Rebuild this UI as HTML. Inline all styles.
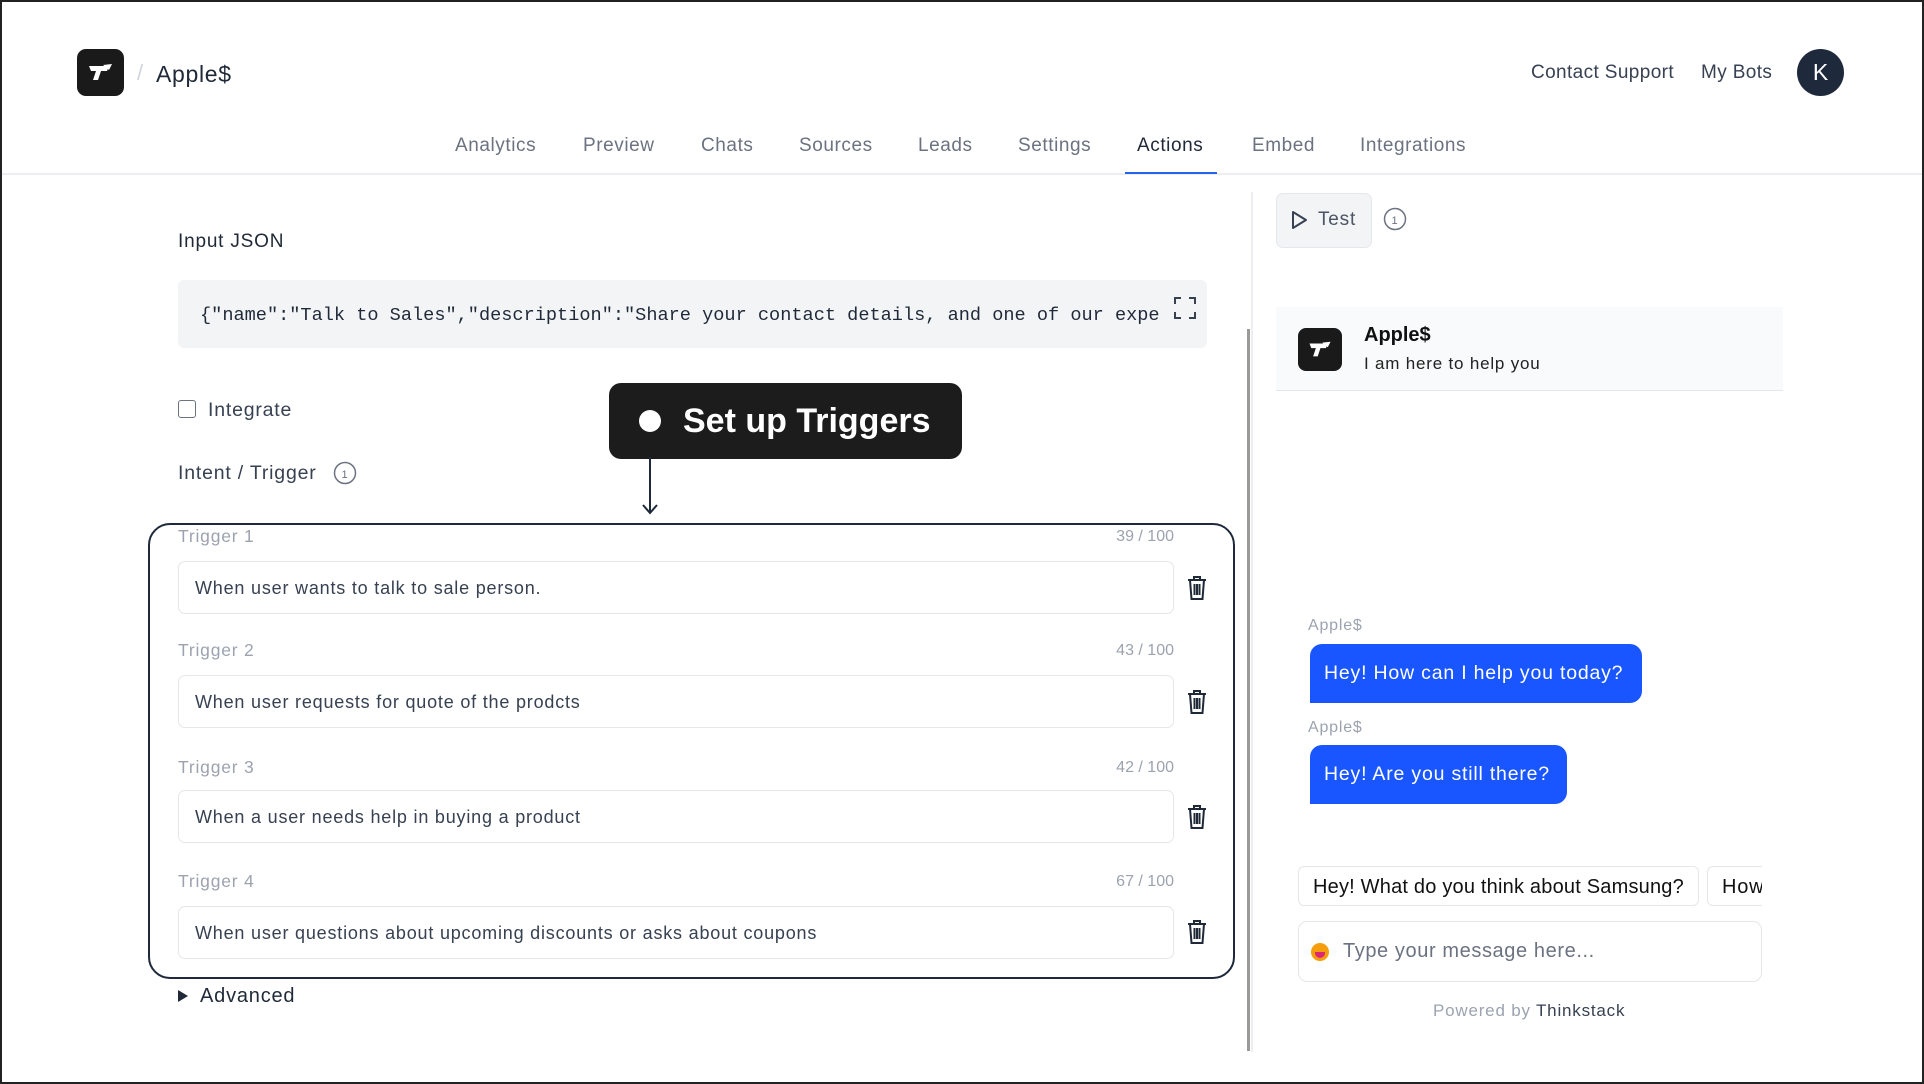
<!DOCTYPE html>
<html><head><meta charset="utf-8"><style>
*{margin:0;padding:0;box-sizing:border-box}
body{width:1924px;height:1084px;background:#fff;font-family:"Liberation Sans",Arial,sans-serif;position:relative;overflow:hidden;color:#111827;letter-spacing:0.05em}
.frame{position:absolute;left:0;top:0;width:1924px;height:1084px;border:2px solid #222;pointer-events:none;z-index:10}
.a{position:absolute;white-space:nowrap}
.nav{font-size:19px;color:#6b7280;top:135px;letter-spacing:0.03em}
.lbl{font-size:17.5px;color:#9ca3af}
.cnt{font-size:16px;color:#9ca3af;right:750px;letter-spacing:0}
.inp{position:absolute;left:178px;width:996px;height:53px;border:1.5px solid #e5e7eb;border-radius:7px;font-size:18px;color:#374151;padding:16px 0 0 16px}
.trash{position:absolute;left:1187px}
</style></head><body>
<div class="frame"></div>
<div class="a" style="left:77px;top:49px;width:47px;height:47px;background:#1a1a1a;border-radius:9px">
<svg width="47" height="47" viewBox="0 0 47 47"><path d="M12 17h20l-2 5h-6l-3 9h-5l3-9h-5z M26 16l9-1-3 6z" fill="#fff"/></svg></div>
<div class="a" style="left:137px;top:60px;font-size:22px;color:#d1d5db">/</div>
<div class="a" style="left:156px;top:61px;font-size:23px;color:#1f2937;letter-spacing:0.03em">Apple$</div>
<div class="a" style="left:1531px;top:62px;font-size:19px;color:#374151;letter-spacing:0.02em">Contact Support</div>
<div class="a" style="left:1701px;top:62px;font-size:19px;color:#374151;letter-spacing:0.02em">My Bots</div>
<div class="a" style="left:1797px;top:49px;width:47px;height:47px;border-radius:50%;background:#1e293b;color:#fff;font-size:23px;text-align:center;line-height:47px;letter-spacing:0">K</div>
<div class="a nav" style="left:455px">Analytics</div>
<div class="a nav" style="left:583px">Preview</div>
<div class="a nav" style="left:701px">Chats</div>
<div class="a nav" style="left:799px">Sources</div>
<div class="a nav" style="left:918px">Leads</div>
<div class="a nav" style="left:1018px">Settings</div>
<div class="a nav" style="left:1137px;color:#1f2937">Actions</div>
<div class="a nav" style="left:1252px">Embed</div>
<div class="a nav" style="left:1360px">Integrations</div>
<div class="a" style="left:0;top:173px;width:1924px;height:2px;background:#eceef2"></div>
<div class="a" style="left:1125px;top:172px;width:92px;height:2px;background:#2563eb"></div>
<div class="a" style="left:178px;top:231px;font-size:19px;color:#1f2937">Input JSON</div>
<div class="a" style="left:178px;top:280px;width:1029px;height:68px;background:#f3f4f6;border-radius:6px;overflow:hidden">
<div class="a" style="left:22px;top:25px;width:968px;overflow:hidden;font-family:'Liberation Mono',monospace;font-size:18.6px;color:#1f2937;letter-spacing:0">{"name":"Talk to Sales","description":"Share your contact details, and one of our expe</div>
<svg class="a" style="left:996px;top:17px" width="22" height="22" viewBox="0 0 22 22" fill="none" stroke="#374151" stroke-width="2"><path d="M1 7V1h6M15 1h6v6M21 15v6h-6M7 21H1v-6"/></svg>
</div>
<div class="a" style="left:178px;top:400px;width:18px;height:18px;border:1.5px solid #6b7280;border-radius:3px"></div>
<div class="a" style="left:208px;top:399px;font-size:19.5px;color:#374151">Integrate</div>
<div class="a" style="left:178px;top:462px;font-size:19.5px;color:#374151">Intent / Trigger</div>
<svg class="a" style="left:333px;top:461px" width="24" height="24" viewBox="0 0 24 24"><circle cx="12" cy="12" r="10.5" fill="none" stroke="#6b7280" stroke-width="1.5"/><text x="12" y="17" font-size="11" text-anchor="middle" fill="#6b7280" font-family="Liberation Sans">1</text></svg>
<div class="a" style="left:609px;top:383px;width:353px;height:76px;background:#1c1c1c;border-radius:12px"></div>
<div class="a" style="left:639px;top:410px;width:22px;height:22px;border-radius:50%;background:#fff"></div>
<div class="a" style="left:683px;top:402px;font-size:34px;font-weight:bold;color:#fff;letter-spacing:0">Set up Triggers</div>
<svg class="a" style="left:640px;top:455px" width="20" height="62" viewBox="0 0 20 62"><path d="M10 2V58M3 50l7 8 7-8" fill="none" stroke="#1e293b" stroke-width="2"/></svg>
<div class="a" style="left:148px;top:523px;width:1087px;height:456px;border:2px solid #1e293b;border-radius:22px"></div>
<div class="a lbl" style="left:178px;top:526px">Trigger 1</div><div class="a cnt" style="top:528px">39 / 100</div>
<div class="inp" style="top:561px">When user wants to talk to sale person.</div>
<div class="a lbl" style="left:178px;top:640px">Trigger 2</div><div class="a cnt" style="top:642px">43 / 100</div>
<div class="inp" style="top:675px">When user requests for quote of the prodcts</div>
<div class="a lbl" style="left:178px;top:757px">Trigger 3</div><div class="a cnt" style="top:759px">42 / 100</div>
<div class="inp" style="top:790px">When a user needs help in buying a product</div>
<div class="a lbl" style="left:178px;top:871px">Trigger 4</div><div class="a cnt" style="top:873px">67 / 100</div>
<div class="inp" style="top:906px">When user questions about upcoming discounts or asks about coupons</div>
<svg class="trash" style="top:576px" width="20" height="24" viewBox="0 0 20 24" fill="none" stroke="#1f2937" stroke-width="2"><path d="M1 4h18M7 4V1h6v3M3 4l1.5 19h11L17 4M7.5 8v11M10 8v11M12.5 8v11"/></svg>
<svg class="trash" style="top:690px" width="20" height="24" viewBox="0 0 20 24" fill="none" stroke="#1f2937" stroke-width="2"><path d="M1 4h18M7 4V1h6v3M3 4l1.5 19h11L17 4M7.5 8v11M10 8v11M12.5 8v11"/></svg>
<svg class="trash" style="top:805px" width="20" height="24" viewBox="0 0 20 24" fill="none" stroke="#1f2937" stroke-width="2"><path d="M1 4h18M7 4V1h6v3M3 4l1.5 19h11L17 4M7.5 8v11M10 8v11M12.5 8v11"/></svg>
<svg class="trash" style="top:920px" width="20" height="24" viewBox="0 0 20 24" fill="none" stroke="#1f2937" stroke-width="2"><path d="M1 4h18M7 4V1h6v3M3 4l1.5 19h11L17 4M7.5 8v11M10 8v11M12.5 8v11"/></svg>
<svg class="a" style="left:177px;top:989px" width="12" height="14" viewBox="0 0 12 14"><path d="M1 1l10 6-10 6z" fill="#1f2937"/></svg>
<div class="a" style="left:200px;top:985px;font-size:20px;color:#1f2937">Advanced</div>
<div class="a" style="left:1251px;top:192px;width:2px;height:860px;background:#eceef1"></div>
<div class="a" style="left:1247px;top:329px;width:3px;height:722px;background:#9a9a9a"></div>
<div class="a" style="left:1276px;top:193px;width:96px;height:55px;background:#f3f4f6;border:1px solid #e5e7eb;border-radius:7px"></div>
<svg class="a" style="left:1291px;top:209px" width="18" height="22" viewBox="0 0 18 22"><path d="M2 3l13 8-13 8z" fill="none" stroke="#374151" stroke-width="2" stroke-linejoin="round"/></svg>
<div class="a" style="left:1318px;top:209px;font-size:19px;color:#4b5563">Test</div>
<svg class="a" style="left:1383px;top:207px" width="24" height="24" viewBox="0 0 24 24"><circle cx="12" cy="12" r="10.5" fill="none" stroke="#6b7280" stroke-width="1.5"/><text x="12" y="17" font-size="11" text-anchor="middle" fill="#6b7280" font-family="Liberation Sans">1</text></svg>
<div class="a" style="left:1276px;top:307px;width:507px;height:84px;background:#f9fafb;border-bottom:1.5px solid #e5e7eb"></div>
<div class="a" style="left:1298px;top:328px;width:44px;height:43px;background:#1a1a1a;border-radius:8px">
<svg width="44" height="43" viewBox="0 0 47 47"><path d="M12 17h20l-2 5h-6l-3 9h-5l3-9h-5z M26 16l9-1-3 6z" fill="#fff"/></svg></div>
<div class="a" style="left:1364px;top:324px;font-size:20px;font-weight:bold;color:#111;letter-spacing:0">Apple$</div>
<div class="a" style="left:1364px;top:354px;font-size:17px;color:#222">I am here to help you</div>
<div class="a" style="left:1308px;top:617px;font-size:16px;color:#9ca3af">Apple$</div>
<div class="a" style="left:1310px;top:644px;width:332px;height:59px;background:#1a56ff;border-radius:12px 12px 12px 0;color:#fff;font-size:19.5px;padding:18px 0 0 14px">Hey! How can I help you today?</div>
<div class="a" style="left:1308px;top:719px;font-size:16px;color:#9ca3af">Apple$</div>
<div class="a" style="left:1310px;top:745px;width:257px;height:59px;background:#1a56ff;border-radius:12px 12px 12px 0;color:#fff;font-size:19.5px;padding:18px 0 0 14px">Hey! Are you still there?</div>
<div class="a" style="left:1298px;top:866px;width:401px;height:40px;border:1.5px solid #e5e7eb;border-radius:6px;font-size:20px;color:#111;padding:9px 0 0 14px;letter-spacing:0.01em">Hey! What do you think about Samsung?</div>
<div class="a" style="left:1707px;top:866px;width:55px;height:40px;border:1.5px solid #e5e7eb;border-right:none;border-radius:6px 0 0 6px;font-size:20px;color:#111;padding:9px 0 0 14px;overflow:hidden">How</div>
<div class="a" style="left:1298px;top:921px;width:464px;height:61px;border:1.5px solid #e5e7eb;border-radius:9px"></div>
<div class="a" style="left:1311px;top:943px;width:18px;height:18px;border-radius:50%;background:#f59e0b"><div style="position:absolute;left:4px;top:9px;width:10px;height:6px;background:#db2777;border-radius:0 0 5px 5px"></div></div>
<div class="a" style="left:1343px;top:940px;font-size:20px;color:#6b7280;letter-spacing:0.03em">Type your message here...</div>
<div class="a" style="left:1433px;top:1001px;font-size:17px;color:#9ca3af">Powered by <span style="color:#374151">Thinkstack</span></div>
</body></html>
